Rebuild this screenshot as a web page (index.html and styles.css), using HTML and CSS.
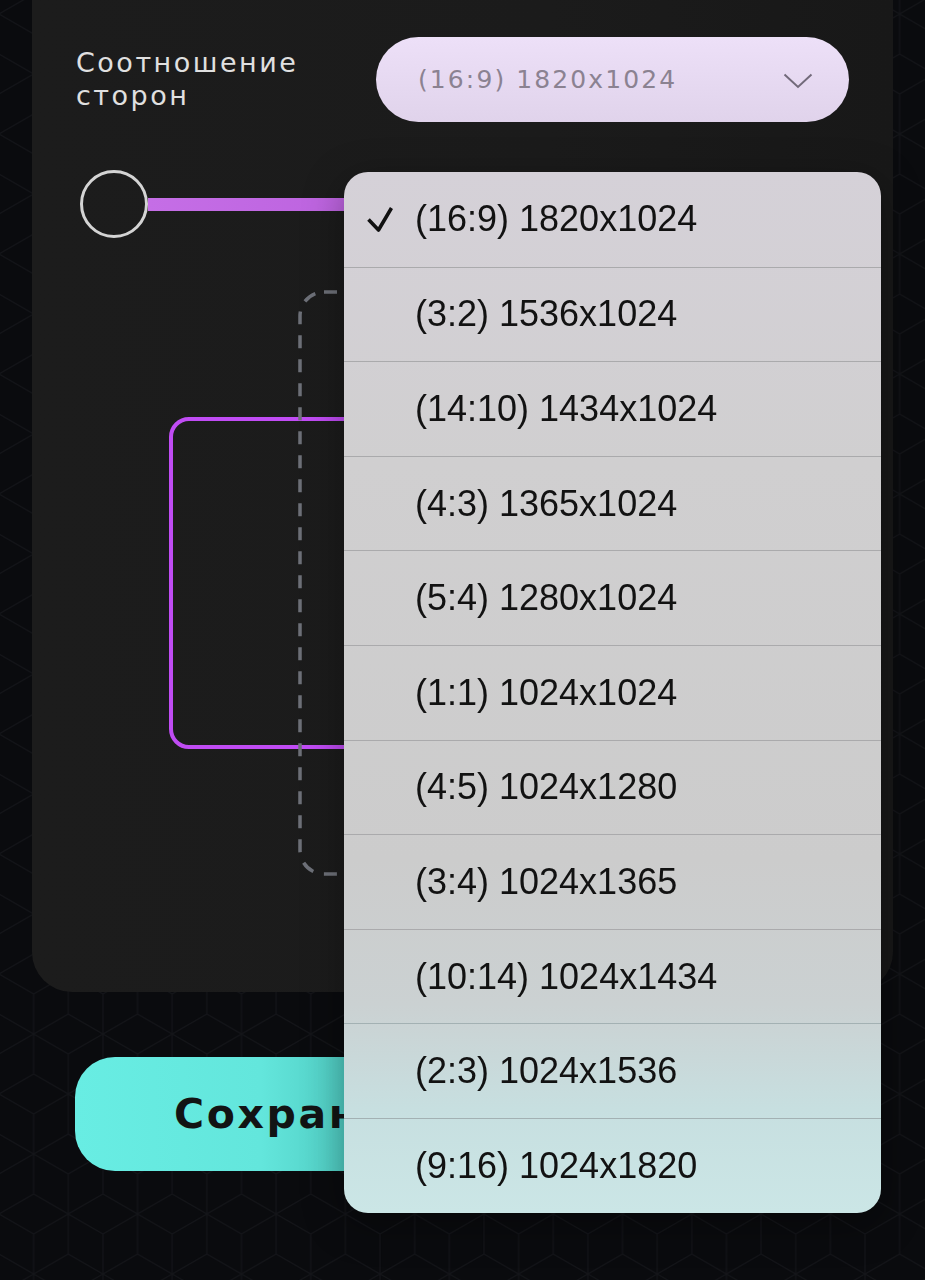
FILE: index.html
```html
<!DOCTYPE html>
<html lang="ru">
<head>
  <meta charset="UTF-8" />
  <title>Соотношение сторон</title>
  <meta name="viewport" content="width=device-width, initial-scale=1" />
  <link rel="stylesheet" href="styles.css">
</head>
<body>
  <!-- фон с кубиками -->
  <svg class="bg-grid" width="100%" height="100%" aria-hidden="true">
    <defs>
      <pattern id="cubes" width="69.28" height="120" patternUnits="userSpaceOnUse" x="-1" y="-6">
        <path d="M34.64 0 L69.28 20 L69.28 60 L34.64 80 L0 60 L0 20 Z M34.64 80 L34.64 120 M34.64 40 L34.64 80 M34.64 40 L0 20 M34.64 40 L69.28 20 M0 100 L0 120 M0 100 L34.64 80 M69.28 100 L69.28 120 M69.28 100 L34.64 80 M0 0 L0 20 M69.28 0 L69.28 20" fill="none" stroke="#141519" stroke-width="1.2"/>
      </pattern>
    </defs>
    <rect width="100%" height="100%" fill="url(#cubes)"/>
  </svg>

  <div class="page">
    <section class="card">
      <div class="ratio-row">
        <div class="ratio-label">Соотношение сторон</div>
        <div class="select-wrap">
          <button type="button" class="select-pill">
            <span>(16:9) 1820x1024</span>
            <svg class="chevron" width="30" height="16" viewBox="0 0 30 16">
              <polyline points="1.5,1.5 15,14 28.5,1.5" fill="none" stroke="#726a7a" stroke-width="2"/>
            </svg>
          </button>

          <!-- выпадающий список -->
          <ul class="dropdown">
            <li class="selected">
              <span class="check">
                <svg width="26" height="26" viewBox="0 0 26 26">
                  <polyline points="1.5,13.5 11.5,24 24.5,2" fill="none" stroke="#111" stroke-width="3.6" stroke-linejoin="round"/>
                </svg>
              </span>
              (16:9) 1820x1024
            </li>
            <li><span class="check"></span>(3:2) 1536x1024</li>
            <li><span class="check"></span>(14:10) 1434x1024</li>
            <li><span class="check"></span>(4:3) 1365x1024</li>
            <li><span class="check"></span>(5:4) 1280x1024</li>
            <li><span class="check"></span>(1:1) 1024x1024</li>
            <li><span class="check"></span>(4:5) 1024x1280</li>
            <li><span class="check"></span>(3:4) 1024x1365</li>
            <li><span class="check"></span>(10:14) 1024x1434</li>
            <li><span class="check"></span>(2:3) 1024x1536</li>
            <li><span class="check"></span>(9:16) 1024x1820</li>
          </ul>
        </div>
      </div>

      <div class="slider">
        <div class="knob"></div>
        <div class="track"></div>
      </div>

      <div class="preview">
        <div class="frame-land"></div>
        <svg class="frame-portrait" width="330" height="586" viewBox="0 0 330 586">
          <rect x="2" y="2" width="326" height="582" rx="24" fill="none" stroke="#6d7078" stroke-width="3.5" stroke-dasharray="13 11"/>
        </svg>
      </div>
    </section>

    <button type="button" class="save-btn">Сохранить</button>
  </div>
</body>
</html>
```

FILE: styles.css
```css
body {
  margin: 0;
  background: #0a0b0e;
  font-family: 'DejaVu Sans', 'Liberation Sans', sans-serif;
  min-height: 100vh;
  overflow: hidden;
}
.bg-grid {
  position: fixed;
  top: 0;
  left: 0;
  z-index: -1;
}
.page {
  padding: 0 32px;
  display: flex;
  flex-direction: column;
}
.card {
  margin-top: -40px;
  background: linear-gradient(90deg, #1c1c1c 0%, #1b1b1b 60%, #181818 100%);
  border-radius: 40px;
  padding: 77px 44px 99px 44px;
  display: flex;
  flex-direction: column;
}
.ratio-row {
  display: flex;
  align-items: center;
  gap: 20px;
}
.ratio-label {
  flex: 1;
  color: #e0e0e0;
  font-size: 27px;
  line-height: 33px;
  letter-spacing: 2.5px;
  margin-top: -1px;
}
.select-wrap {
  position: relative;
  width: 473px;
}
.select-pill {
  width: 100%;
  height: 85px;
  border: none;
  border-radius: 43px;
  background: linear-gradient(180deg, #ede0f8 0%, #e0d3eb 100%);
  display: flex;
  align-items: center;
  justify-content: space-between;
  padding: 0 36px 0 42px;
  font-family: 'DejaVu Sans', sans-serif;
  font-size: 25px;
  letter-spacing: 2.1px;
  color: #8b8291;
  cursor: pointer;
}
.chevron { margin-top: 2px; }

.dropdown {
  position: absolute;
  top: 135px;
  left: -32px;
  width: 537px;
  margin: 0;
  padding: 0;
  list-style: none;
  border-radius: 24px;
  overflow: hidden;
  z-index: 10;
  background: linear-gradient(180deg, #d5d1d8 0%, #d0cfd0 28%, #cccccc 66%, #cbd1d2 80%, #c7dfe0 90%, #cbe6e6 100%);
  box-shadow: 0 10px 40px rgba(0, 0, 0, 0.35);
}
.dropdown li {
  box-sizing: border-box;
  height: 94.6px;
  display: flex;
  align-items: center;
  padding-left: 23px;
  font-family: 'Liberation Sans', Arial, sans-serif;
  font-size: 36px;
  color: #121212;
  border-top: 1px solid #aaaaac;
}
.dropdown li:first-child { border-top: none; }
.dropdown li:nth-child(n+10) { border-top-color: #a3b1b3; }
.check {
  width: 48px;
  display: flex;
  align-items: center;
}

.slider {
  margin-top: 48px;
  display: flex;
  align-items: center;
}
.knob {
  box-sizing: border-box;
  width: 68px;
  height: 68px;
  border-radius: 50%;
  border: 3px solid #d4d4d4;
  margin-left: 4px;
  flex-shrink: 0;
}
.track {
  flex: 1;
  height: 13px;
  background: linear-gradient(90deg, #c56ee6 0%, #b95fdc 40%, #a552c8 100%);
}

.preview {
  margin-top: 35px;
  height: 620px;
  display: grid;
  place-items: center;
}
.frame-land, .frame-portrait { grid-area: 1 / 1; }
.frame-land {
  box-sizing: border-box;
  width: 587px;
  height: 332px;
  border: 4px solid #c04cf4;
  border-radius: 20px;
}

.save-btn {
  margin: 65px 43px 0 43px;
  height: 114px;
  border: none;
  border-radius: 40px;
  background: linear-gradient(90deg, #68ede3 0%, #63e6dc 24%, #4ecbc1 36%, #4cc8be 100%);
  font-family: 'DejaVu Sans', sans-serif;
  font-weight: bold;
  font-size: 41px;
  letter-spacing: 2.6px;
  color: #121414;
  text-align: left;
  padding-left: 99px;
  cursor: pointer;
}
```
